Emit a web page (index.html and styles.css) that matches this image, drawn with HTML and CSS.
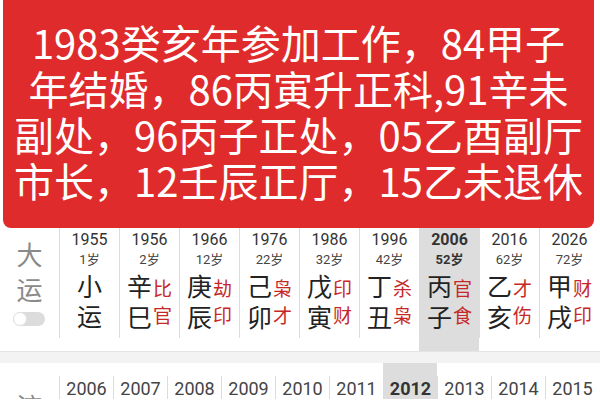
FILE: index.html
```html
<!DOCTYPE html>
<html lang="zh-CN">
<head>
<meta charset="utf-8">
<link rel="stylesheet" href="styles.css">
</head>
<body>
<div class="banner">
  <span class="line">1983癸亥年参加工作，84甲子</span>
  <span class="line">年结婚，86丙寅升正科,91辛未</span>
  <span class="line">副处，96丙子正处，05乙酉副厅</span>
  <span class="line">市长，12壬辰正厅，15乙未退休</span>
</div>

<div class="dayun">
  <div class="label-col">
    <div class="label">大</div>
    <div class="label">运</div>
    <div class="toggle"><span class="knob"></span></div>
  </div>
  <div class="dy-col"><div class="col-body">
    <div class="yr">1955</div><div class="age">1岁</div>
    <div class="gz"><span class="g">小</span></div>
    <div class="gz"><span class="g">运</span></div>
  </div></div>
  <div class="dy-col"><div class="col-body">
    <div class="yr">1956</div><div class="age">2岁</div>
    <div class="gz"><span class="g">辛</span><span class="ss">比</span></div>
    <div class="gz zhi"><span class="g">巳</span><span class="ss">官</span></div>
  </div></div>
  <div class="dy-col"><div class="col-body">
    <div class="yr">1966</div><div class="age">12岁</div>
    <div class="gz"><span class="g">庚</span><span class="ss">劫</span></div>
    <div class="gz zhi"><span class="g">辰</span><span class="ss">印</span></div>
  </div></div>
  <div class="dy-col"><div class="col-body">
    <div class="yr">1976</div><div class="age">22岁</div>
    <div class="gz"><span class="g">己</span><span class="ss">枭</span></div>
    <div class="gz zhi"><span class="g">卯</span><span class="ss">才</span></div>
  </div></div>
  <div class="dy-col"><div class="col-body">
    <div class="yr">1986</div><div class="age">32岁</div>
    <div class="gz"><span class="g">戊</span><span class="ss">印</span></div>
    <div class="gz zhi"><span class="g">寅</span><span class="ss">财</span></div>
  </div></div>
  <div class="dy-col"><div class="col-body">
    <div class="yr">1996</div><div class="age">42岁</div>
    <div class="gz"><span class="g">丁</span><span class="ss">杀</span></div>
    <div class="gz zhi"><span class="g">丑</span><span class="ss">枭</span></div>
  </div></div>
  <div class="dy-col cur"><div class="col-body">
    <div class="yr">2006</div><div class="age">52岁</div>
    <div class="gz"><span class="g">丙</span><span class="ss">官</span></div>
    <div class="gz zhi"><span class="g">子</span><span class="ss">食</span></div>
  </div></div>
  <div class="dy-col"><div class="col-body">
    <div class="yr">2016</div><div class="age">62岁</div>
    <div class="gz"><span class="g">乙</span><span class="ss">才</span></div>
    <div class="gz zhi"><span class="g">亥</span><span class="ss">伤</span></div>
  </div></div>
  <div class="dy-col"><div class="col-body">
    <div class="yr">2026</div><div class="age">72岁</div>
    <div class="gz"><span class="g">甲</span><span class="ss">财</span></div>
    <div class="gz zhi"><span class="g">戌</span><span class="ss">印</span></div>
  </div></div>
</div>

<div class="sep"></div>

<div class="liunian">
  <div class="label-col ln-label">
    <div class="label">流</div>
  </div>
  <div class="ln-col"><div class="ln-body">2006</div></div>
  <div class="ln-col"><div class="ln-body">2007</div></div>
  <div class="ln-col"><div class="ln-body">2008</div></div>
  <div class="ln-col"><div class="ln-body">2009</div></div>
  <div class="ln-col"><div class="ln-body">2010</div></div>
  <div class="ln-col"><div class="ln-body">2011</div></div>
  <div class="ln-col cur"><div class="ln-body">2012</div></div>
  <div class="ln-col"><div class="ln-body">2013</div></div>
  <div class="ln-col"><div class="ln-body">2014</div></div>
  <div class="ln-col"><div class="ln-body">2015</div></div>
</div>
</body>
</html>
```

FILE: styles.css
```css
html, body {
  margin: 0;
  padding: 0;
  background: #ffffff;
  width: 600px;
  height: 400px;
  overflow: hidden;
  font-family: Roboto, "Noto Sans CJK SC", sans-serif;
}

.banner {
  margin: 0 6px 0 3px;
  height: 228px;
  box-sizing: border-box;
  padding-top: 19px;
  background: #df2b2b;
  border-radius: 0 0 8px 8px;
  color: #ffffff;
  text-align: center;
  font-family: "Noto Sans CJK SC", sans-serif;
  font-size: 40px;
  line-height: 46px;
}

.banner .line {
  display: block;
  white-space: nowrap;
}

.dayun {
  display: flex;
  height: 123px;
}

.label-col {
  width: 59px;
  flex: none;
  display: flex;
  flex-direction: column;
  align-items: center;
  padding-top: 8px;
  box-sizing: border-box;
}

.label {
  font-family: "Noto Sans CJK SC", sans-serif;
  font-size: 26px;
  line-height: 35px;
  color: #8a8a8a;
}

.toggle {
  margin-top: 6px;
  width: 32px;
  height: 14px;
  border-radius: 7px;
  background: #dcdcdc;
  display: flex;
  align-self: flex-start;
  margin-left: 13px;
}

.knob {
  width: 12px;
  height: 12px;
  border-radius: 50%;
  background: #ffffff;
  border: 1px solid #e2e2e2;
}

.dy-col {
  width: 60px;
  flex: none;
  padding-bottom: 13px;
  box-sizing: border-box;
}

.dy-col.cur {
  background: #dddddd;
}

.col-body {
  height: 110px;
  box-sizing: border-box;
  border-left: 1px solid #dcdcdc;
  padding-top: 2px;
  text-align: center;
}

.yr {
  font-size: 16px;
  line-height: 20px;
  color: #333333;
}

.age {
  font-size: 13px;
  line-height: 20px;
  color: #444444;
}

.cur .yr,
.cur .age {
  font-weight: bold;
  color: #333333;
}

.gz {
  font-family: "Noto Sans CJK SC", sans-serif;
  line-height: 30px;
  height: 30px;
  white-space: nowrap;
}

.dy-col .gz:first-of-type {
  margin-top: 4px;
}

.g {
  font-size: 25px;
  color: #222222;
}

.ss {
  font-size: 19px;
  color: #c62828;
  margin-left: 1px;
}

.zhi .ss {
  vertical-align: 4px;
}

.sep {
  border-top: 1px solid #e4e4e4;
  height: 11px;
  background: #f3f3f3;
}

.liunian {
  display: flex;
  height: 36px;
  overflow: hidden;
}

.ln-label {
  padding-top: 25px;
}

.ln-col {
  width: 54px;
  flex: none;
  padding-top: 13px;
  box-sizing: border-box;
}

.ln-col.cur {
  background: #dddddd;
}

.ln-body {
  border-left: 1px solid #dcdcdc;
  height: 23px;
  text-align: center;
  font-size: 18px;
  line-height: 26px;
  color: #444444;
}

.ln-col.cur .ln-body {
  font-weight: bold;
  color: #333333;
}
```
